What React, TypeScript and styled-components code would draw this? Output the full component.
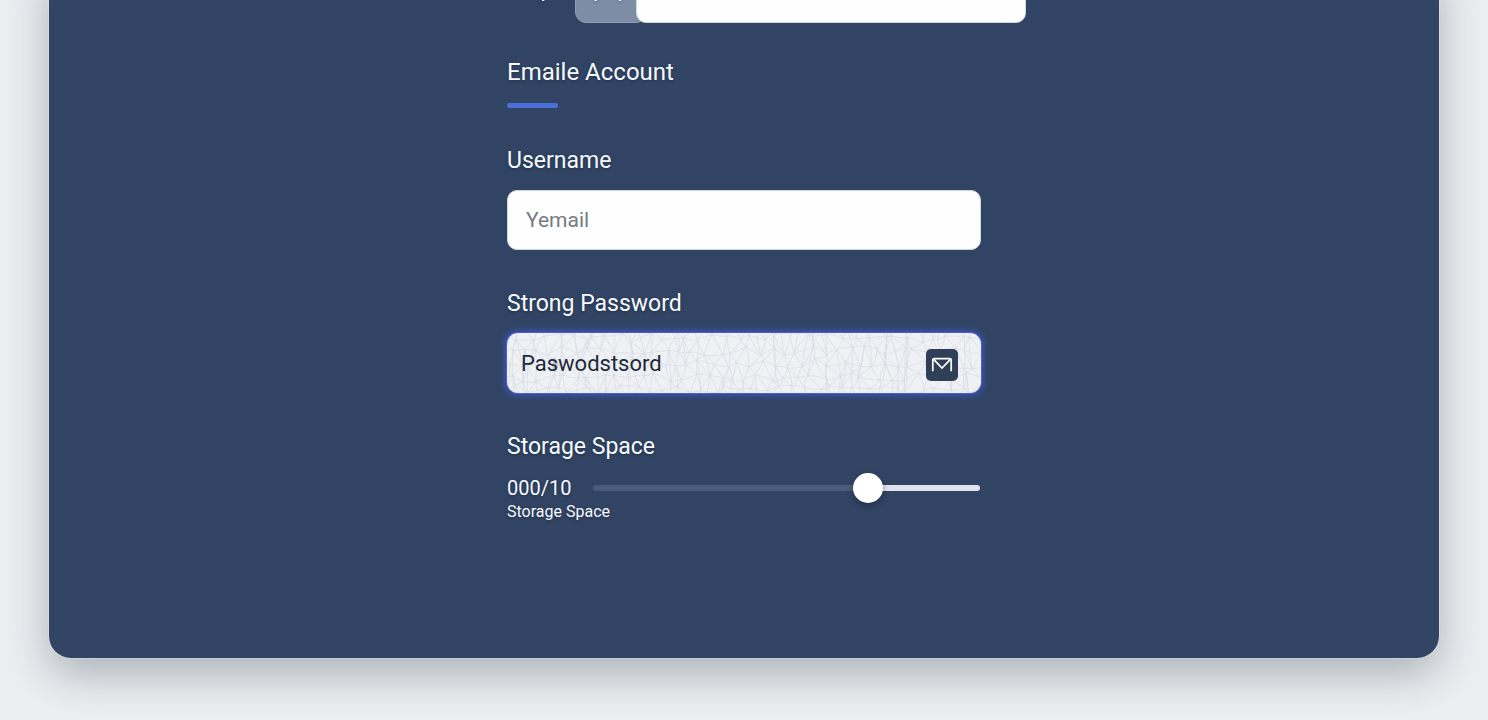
import React from 'react';
import styled, { createGlobalStyle } from 'styled-components';

const GlobalStyle = createGlobalStyle`
  *, *::before, *::after { box-sizing: border-box; }
  html, body { margin: 0; }
  body {
    background: #ebeff2;
    font-family: Roboto, "Liberation Sans", sans-serif;
    color: #f7fafd;
  }
  input { font-family: inherit; }
`;

const Page = styled.main`
  overflow: hidden;
  min-height: 100vh;
  padding: 0 49px 61px;
`;

const Card = styled.section`
  display: flex;
  justify-content: center;
  margin-top: -37px;
  padding-bottom: 134px;
  border-radius: 0 0 22px 22px;
  background: #314463;
  box-shadow:
    0 0 0 1px rgba(214, 226, 240, 0.5),
    0 16px 44px rgba(40, 48, 62, 0.32);
`;

const Form = styled.form`
  display: flex;
  flex-direction: column;
  width: 474px;
  max-width: 100%;
  text-shadow: 0 1px 3px rgba(14, 26, 46, 0.45);
`;

const TopRow = styled.div`
  display: flex;
  align-items: stretch;
  height: 60px;
  margin: 0 -45px 35px 0;
`;

const TopLabel = styled.label`
  flex: 0 0 68px;
  padding-top: 12px;
  font-size: 23px;
  line-height: 28px;
`;

const Prefix = styled.span`
  flex: 0 0 72px;
  margin-right: -11px;
  padding: 12px 0 0 17px;
  border: 1px solid #8e9db6;
  border-radius: 11px;
  background: #7f8ca6;
  font-size: 22px;
  line-height: 26px;
`;

const TextInput = styled.input`
  flex: 1 0 auto;
  min-width: 0;
  height: 60px;
  padding: 0 18px;
  border: 1px solid #cdd6e4;
  border-radius: 10px;
  background: #fefefe;
  color: #1f2937;
  font-size: 21px;
  outline: none;
  &::placeholder { color: #737b82; opacity: 1; }
`;

const Heading = styled.h2`
  margin: 0 0 17px;
  font-size: 24px;
  font-weight: 400;
  line-height: 28px;
`;

const Accent = styled.div`
  width: 51px;
  height: 5px;
  margin-bottom: 39px;
  border-radius: 2px;
  background: #4a6fd6;
`;

const Field = styled.div`
  display: flex;
  flex-direction: column;
  gap: 15px;
  margin-bottom: 40px;
  &:last-child { margin-bottom: 0; }
`;

const Label = styled.label`
  font-size: 23px;
  line-height: 28px;
`;

const PasswordBox = styled.div`
  display: grid;
  grid-template-columns: minmax(0, 1fr) 55px;
  grid-template-rows: 60px;
  align-items: center;
  overflow: hidden;
  border-radius: 11px;
  background: #eff1f5;
  text-shadow: none;
`;

const Glow = styled.div`
  border-radius: 11px;
  box-shadow: 0 0 0 1px #4560cc, 0 0 7px 2px rgba(66, 90, 214, 0.85);
`;

const Texture = styled.svg`
  grid-area: 1 / 1 / 2 / 3;
  display: block;
  width: 100%;
  height: 60px;
`;

const PasswordInput = styled.input`
  grid-area: 1 / 1;
  position: relative;
  width: 100%;
  height: 60px;
  padding: 0 14px;
  border: 0;
  background: radial-gradient(ellipse 4px 9px at 48px 32px, rgba(100, 105, 112, 0.5), transparent);
  color: #1f2938;
  font-size: 22px;
  outline: none;
`;

const MailButton = styled.button`
  grid-area: 1 / 2;
  position: relative;
  display: flex;
  align-items: center;
  justify-content: center;
  width: 32px;
  height: 32px;
  margin-top: 3px;
  padding: 0;
  border: 0;
  border-radius: 5px;
  background: #2f3f58;
`;

const StorageRow = styled.div`
  display: grid;
  grid-template-columns: auto 1fr;
  grid-template-rows: 24px 24px;
  align-items: center;
`;

const Amount = styled.output`
  width: 64px;
  font-size: 20px;
  line-height: 24px;
`;

const Caption = styled.small`
  grid-column: 1 / 3;
  font-size: 16px;
  line-height: 24px;
`;

const Slider = styled.input`
  appearance: none;
  height: 30px;
  margin: 0 1px 0 22px;
  background: transparent;
  outline: none;
  &::-webkit-slider-runnable-track {
    height: 6px;
    border-radius: 3px;
    background: linear-gradient(90deg, #4a5c79 71%, #dfe4ef 71%);
  }
  &::-webkit-slider-thumb {
    appearance: none;
    width: 30px;
    height: 30px;
    margin-top: -12px;
    border-radius: 50%;
    background: #fff;
    box-shadow: 0 3px 6px rgba(15, 25, 45, 0.45);
  }
`;

/* Fine web of lines: a jittered lattice whose points join their neighbours by shallow arcs. */
function buildWeb(): string {
  let seed = 17;
  const rand = () => {
    seed = (seed * 16807) % 2147483647;
    return seed / 2147483647;
  };
  const step = 13;
  const cols = 40;
  const rows = 7;
  const pts = Array.from({ length: rows }, (_, r) =>
    Array.from({ length: cols }, (_, c) => [
      c * step + (r % 2) * 6 + (rand() - 0.5) * 10 - 8,
      r * step + (rand() - 0.5) * 10 - 8,
    ]),
  );
  const parts: string[] = [];
  const join = (a: number[], b?: number[]) => {
    if (!b) return;
    const mx = (a[0] + b[0]) / 2 + (rand() - 0.5) * 5;
    const my = (a[1] + b[1]) / 2 + (rand() - 0.5) * 5;
    parts.push(
      `M${a[0].toFixed(1)} ${a[1].toFixed(1)}Q${mx.toFixed(1)} ${my.toFixed(1)} ${b[0].toFixed(1)} ${b[1].toFixed(1)}`,
    );
  };
  for (let r = 0; r < rows; r++) {
    for (let c = 0; c < cols; c++) {
      join(pts[r][c], pts[r][c + 1]);
      join(pts[r][c], pts[r + 1]?.[c]);
      join(pts[r][c], pts[r + 1]?.[r % 2 ? c + 1 : c - 1]);
      if (rand() > 0.6) join(pts[r][c], pts[r + 2]?.[c]);
    }
  }
  return parts.join('');
}

const web = buildWeb();

const MailIcon = () => (
  <svg width="22" height="18" viewBox="0 0 22 18" fill="none" stroke="#fff" strokeWidth="1.7" aria-hidden="true">
    <path d="M1.8 15.2V4.2Q1.8 2.6 3.6 2.6H18.4Q20.2 2.6 20.2 4.2V15.2" />
    <path d="M2.4 3.2L11 12L19.6 3.2" />
  </svg>
);

export default function App() {
  return (
    <>
      <GlobalStyle />
      <Page>
        <Card>
          <Form onSubmit={(e) => e.preventDefault()}>
            <TopRow>
              <TopLabel htmlFor="site">Step</TopLabel>
              <Prefix>php</Prefix>
              <TextInput id="site" type="text" />
            </TopRow>
            <Heading>Emaile Account</Heading>
            <Accent />
            <Field>
              <Label htmlFor="username">Username</Label>
              <TextInput id="username" type="text" placeholder="Yemail" />
            </Field>
            <Field>
              <Label htmlFor="password">Strong Password</Label>
              <Glow>
                <PasswordBox>
                  <Texture aria-hidden="true">
                    <path d={web} fill="none" stroke="#d9dde4" strokeWidth="0.7" />
                  </Texture>
                  <PasswordInput id="password" type="text" defaultValue="Paswodstsord" />
                  <MailButton type="button" aria-label="Mail">
                    <MailIcon />
                  </MailButton>
                </PasswordBox>
              </Glow>
            </Field>
            <Field>
              <Label htmlFor="storage">Storage Space</Label>
              <StorageRow>
                <Amount htmlFor="storage">000/10</Amount>
                <Slider id="storage" type="range" min="0" max="1000" defaultValue="727" />
                <Caption>Storage Space</Caption>
              </StorageRow>
            </Field>
          </Form>
        </Card>
      </Page>
    </>
  );
}
